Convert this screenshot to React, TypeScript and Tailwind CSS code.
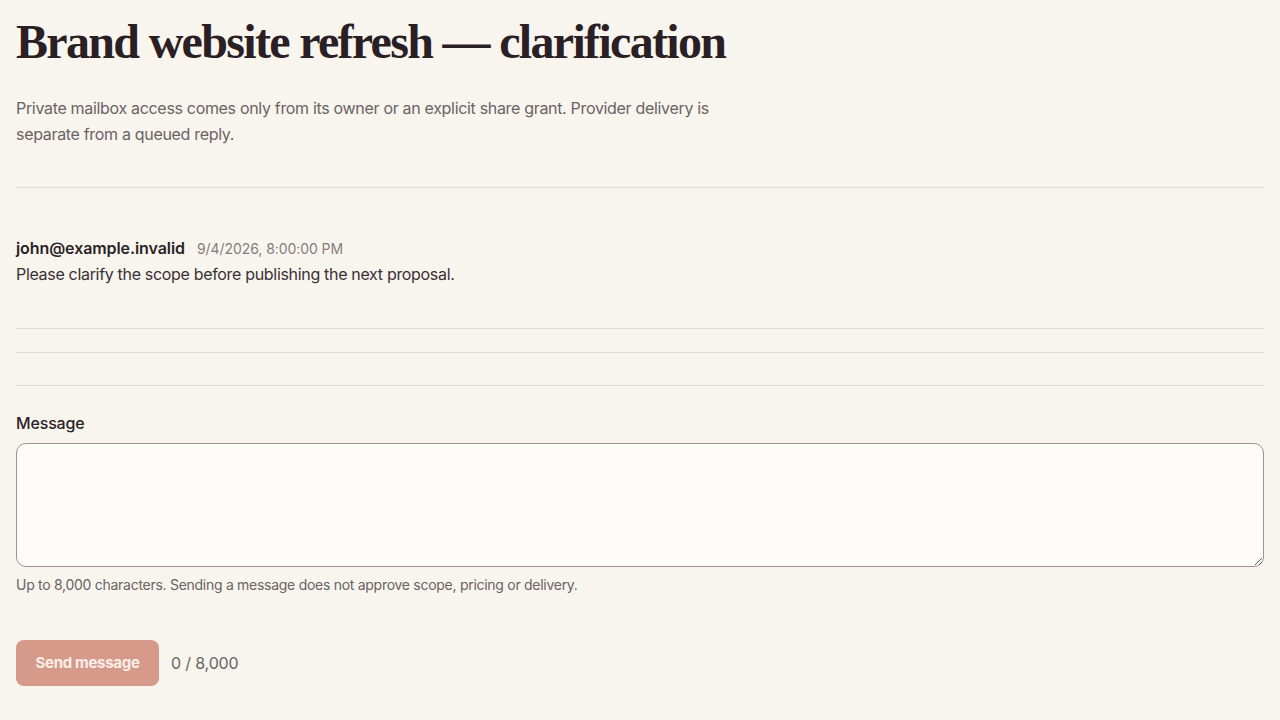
export default function App() {
  return (
    <main className="min-h-screen bg-[#f8f5ef] px-4 pt-4 pb-8 text-[#2b2226] font-['Inter','Noto_Sans',sans-serif]">
      <header>
        <h1 className="font-['Liberation_Serif',serif] font-bold text-[48px] leading-[52px] tracking-[-0.035em] text-[#2a1f24]">
          Brand website refresh — clarification
        </h1>
        <p className="mt-[27px] max-w-[720px] text-[16px] leading-[26px] tracking-[-0.02em] text-[#6b6264]">
          Private mailbox access comes only from its owner or an explicit share grant. Provider delivery is separate from a queued reply.
        </p>
      </header>

      <div className="mt-[40px] border-t border-[#e3dcd6]" />

      <section className="pt-[48px] pb-[43px] border-b border-[#e3dcd6]">
        <div className="flex items-baseline gap-3">
          <span className="text-[16px] font-semibold tracking-[-0.005em] text-[#2b2226]">john@example.invalid</span>
          <span className="text-[14px] tracking-[-0.005em] text-[#857c7e]">9/4/2026, 8:00:00 PM</span>
        </div>
        <p className="mt-[3px] text-[16px] leading-[22px] tracking-[-0.02em] text-[#3a3034]">
          Please clarify the scope before publishing the next proposal.
        </p>
      </section>
      <div className="h-[24px] border-b border-[#e3dcd6]" />
      <div className="h-[33px] border-b border-[#e3dcd6]" />

      <form className="pt-[25px]">
        <label className="block text-[16px] font-medium tracking-[-0.01em] text-[#2b2226]">Message</label>
        <textarea
          className="mt-[8px] block w-full h-[124px] rounded-[10px] border border-[#9b9293] bg-[#fefcf8] px-3 py-2 text-[15px]"
        />
        <p className="mt-[7px] text-[14px] tracking-[-0.02em] text-[#6b6264]">
          Up to 8,000 characters. Sending a message does not approve scope, pricing or delivery.
        </p>
        <div className="mt-[45px] flex items-center gap-3">
          <button
            type="button"
            className="h-[46px] w-[143px] rounded-[8px] bg-[#d69a8a] text-[15px] font-bold tracking-[-0.02em] text-[#fbeee9]"
          >
            Send message
          </button>
          <span className="text-[16px] tracking-[-0.01em] text-[#6b6264]">0 / 8,000</span>
        </div>
      </form>
    </main>
  );
}
